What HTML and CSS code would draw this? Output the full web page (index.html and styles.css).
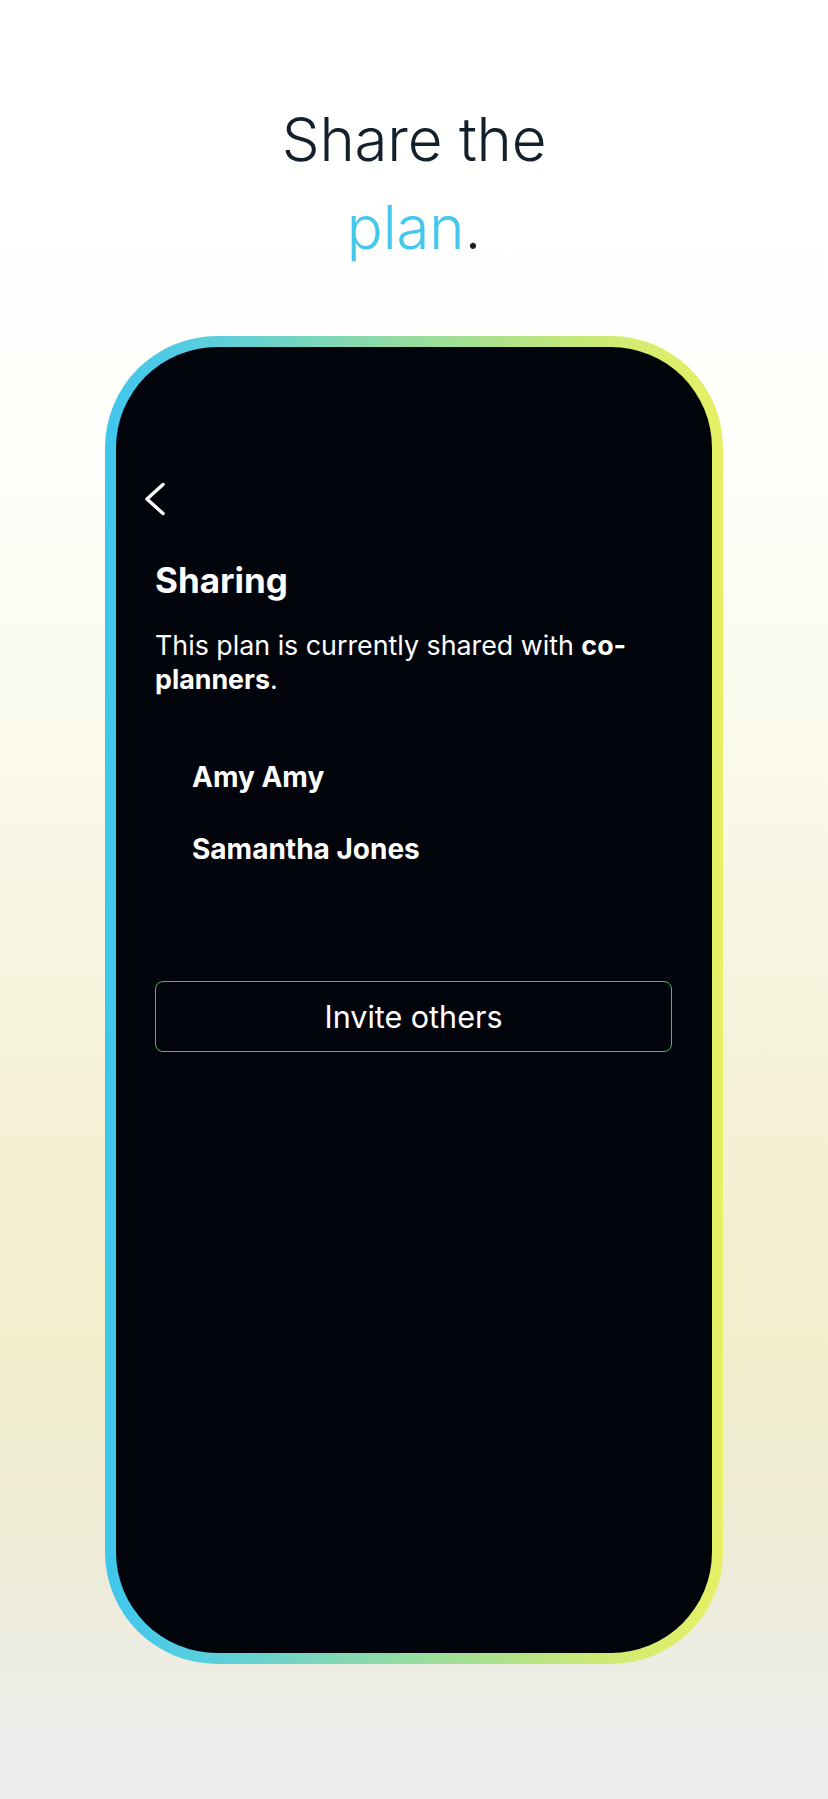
FILE: index.html
```html
<!DOCTYPE html>
<html lang="en">
<head>
<meta charset="utf-8">
<title>Share the plan</title>
<link rel="stylesheet" href="styles.css">
</head>
<body>
<main class="page">
  <h1 class="hero-title">Share the<br><span class="accent">plan</span>.</h1>
  <div class="phone">
    <div class="screen">
      <button class="back" aria-label="Back">
        <svg width="22" height="34" viewBox="0 0 22 34" fill="none" stroke="#ffffff" stroke-width="3.4" stroke-linecap="round" stroke-linejoin="round"><path d="M19 2.5 L3 17 L19 31.5"/></svg>
      </button>
      <h2 class="screen-title">Sharing</h2>
      <p class="lead">This plan is currently shared with <strong>co-</strong><strong>planners</strong>.</p>
      <ul class="people">
        <li>Amy Amy</li>
        <li>Samantha Jones</li>
      </ul>
      <button class="invite">Invite others</button>
    </div>
  </div>
</main>
</body>
</html>
```
FILE: styles.css
```css
html, body {
  margin: 0;
  padding: 0;
}
body {
  width: 828px;
  min-height: 1799px;
  background: linear-gradient(180deg, #ffffff 0%, #fefefb 25%, #f9f8e8 45%, #f4f1d6 62%, #f1eecc 75%, #eeecd8 87%, #ececea 96%, #ececec 100%);
  font-family: "Inter", "Liberation Sans", sans-serif;
}
.page {
  display: flex;
  flex-direction: column;
  align-items: center;
  padding-top: 95px;
  height: 1704px;
}
.hero-title {
  margin: 0;
  font-size: 60px;
  line-height: 88px;
  font-weight: 300;
  letter-spacing: -0.2px;
  color: #13202b;
  text-align: center;
}
.accent {
  color: #43c7ec;
}
.phone {
  margin-top: 65px;
  width: 618px;
  height: 1328px;
  box-sizing: border-box;
  padding: 11px;
  border-radius: 112px;
  background: linear-gradient(90deg, #3fc6ed 0%, #5ccfdc 18%, #86d9b0 40%, #a6e08f 60%, #cdea75 80%, #e7f064 100%);
}
.screen {
  height: 100%;
  box-sizing: border-box;
  border-radius: 101px;
  background: #02040b;
  padding: 135px 40px 0 39px;
  color: #ffffff;
}
.back {
  display: block;
  margin: 0 0 0 -11px;
  padding: 0;
  border: 0;
  background: none;
  width: 22px;
  height: 34px;
}
.back svg {
  display: block;
}
.screen-title {
  margin: 42px 0 0;
  font-size: 35px;
  line-height: 44px;
  font-weight: 700;
}
.lead {
  margin: 26px 0 0;
  font-size: 26.8px;
  line-height: 34px;
  font-weight: 400;
}
.lead strong {
  font-weight: 700;
}
.people {
  list-style: none;
  margin: 64px 0 0;
  padding: 0 0 0 37px;
  display: flex;
  flex-direction: column;
  gap: 38px;
}
.people li {
  font-size: 28px;
  line-height: 34px;
  font-weight: 700;
}
.invite {
  display: flex;
  align-items: center;
  justify-content: center;
  width: 100%;
  height: 71px;
  margin-top: 115px;
  box-sizing: border-box;
  border: 1.5px solid #3dc74c;
  border-radius: 8px;
  background: transparent;
  color: #ffffff;
  font-family: "Inter", "Liberation Sans", sans-serif;
  font-size: 30.5px;
  font-weight: 400;
}
```
